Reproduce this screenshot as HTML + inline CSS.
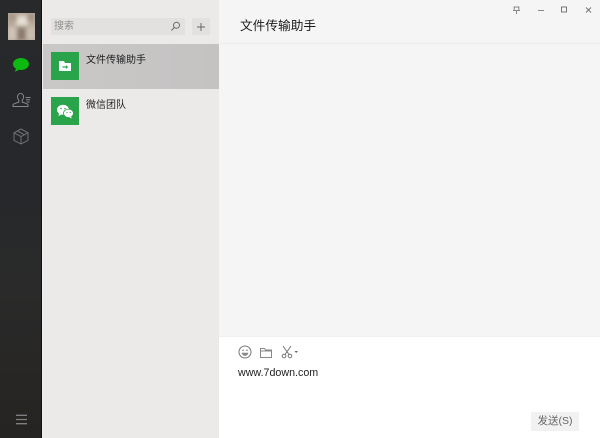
<!DOCTYPE html>
<html><head><meta charset="utf-8">
<style>
*{margin:0;padding:0;box-sizing:border-box}
html,body{width:600px;height:438px;overflow:hidden;background:#fff}
body{position:relative;font-family:"Liberation Sans","Noto Sans CJK SC",sans-serif}
div,svg{position:absolute}
#side{left:0;top:0;width:42px;height:438px;background:linear-gradient(180deg,#27292b 0%,#26282b 40%,#2a2a2a 65%,#262422 100%);border-right:1px solid #0f0f0f}
#ava{left:8px;top:13px;width:27px;height:27px;background:#b8aa9c;overflow:hidden}
#ava i{position:absolute;display:block;filter:blur(2px)}
#list{left:42px;top:0;width:177px;height:438px;background:#eceae8;border-left:1px solid #f0efed}
#search{left:51px;top:18px;width:134px;height:17px;background:#e3e1df;color:#8f8f8f;font-size:10px;line-height:17px;padding-left:3px}
#plus{left:192px;top:18px;width:18px;height:17px;background:#e3e1df}
#sel{left:43px;top:44px;width:176px;height:45px;background:linear-gradient(90deg,#c9c8c7,#c4c3c2)}
.g{left:51px;width:28px;height:28px;background:#2aa44a}
.n{left:86px;font-size:10px;line-height:14px;color:#222;white-space:nowrap}
#main{left:219px;top:0;width:381px;height:336px;background:#f5f5f5}
#hl{left:219px;top:43px;width:381px;height:1px;background:#ebebeb}
#title{left:240px;top:17px;font-size:12.7px;line-height:18px;color:#1a1a1a;white-space:nowrap}
#inp{left:219px;top:336px;width:381px;height:102px;background:#fff;border-top:1px solid #f0f0f0}
#url{left:238px;top:366px;font-size:10.7px;line-height:14px;color:#1f1f1f;white-space:nowrap}
#send{left:531px;top:412px;width:48px;height:19px;background:#f1f1f1;color:#666;font-size:10.500px;line-height:19px;text-align:center}
</style></head><body>
<div id="side"></div>
<div id="ava"><i style="left:8px;top:3px;width:12px;height:10px;background:#e6dfd4"></i><i style="left:0;top:0;width:8px;height:8px;background:#a8998b"></i><i style="right:0;top:0;width:7px;height:8px;background:#a39486"></i><i style="left:9px;top:15px;width:9px;height:12px;background:#8a7a6d"></i><i style="left:0;top:14px;width:8px;height:13px;background:#cfc5b8"></i><i style="right:0;top:14px;width:8px;height:13px;background:#c9bfb2"></i></div>
<svg style="left:12px;top:57px" width="18" height="17" viewBox="0 0 18 17"><path d="M9 1C4.600 1 1 3.600 1 7c0 2 1.200 3.600 3 4.700L2.800 15l4.100-2.200c.7.100 1.400.200 2.100.200 4.400 0 8-2.700 8-6S13.400 1 9 1z" fill="#0cba12"/></svg>
<svg style="left:12px;top:92px" width="20" height="16" viewBox="0 0 20 16" fill="none" stroke="#85878a" stroke-width="1"><path d="M8.500 1.500c-1.900 0-3 1.500-3 3.400 0 1.500.6 2.500 1.300 3.200v2L2 11.800c-.7.300-1 .7-1 1.200v1.500h15V13c0-.5-.3-.9-1-1.200l-4.800-1.700v-2c.7-.7 1.300-1.700 1.300-3.200 0-1.900-1.100-3.400-3-3.400z"/><path d="M13.500 5.500h5M14 7.800h4M14.500 10h3"/></svg>
<svg style="left:13px;top:128px" width="16" height="17" viewBox="0 0 16 17" fill="none" stroke="#6f7174" stroke-width="1"><path d="M8 1l7 3.800v7.600L8 16 1 12.400V4.800zM1 4.800l7 3.800 7-3.800M8 8.600V16M4.500 3l7 3.800"/></svg>
<svg style="left:15px;top:414px" width="13" height="12" viewBox="0 0 13 12" stroke="#7d7f82" stroke-width="1.300"><path d="M1 1.300h11M1 5.500h11M1 9.700h11"/></svg>
<div id="list"></div>
<div id="search">搜索</div>
<svg style="left:170px;top:21px" width="11" height="11" viewBox="0 0 11 11" fill="none" stroke="#6a6a6a" stroke-width="1"><circle cx="6.500" cy="4.300" r="3"/><path d="M4.300 6.500L1.500 9.500"/></svg>
<div id="plus"></div>
<svg style="left:196px;top:22px" width="10" height="10" viewBox="0 0 10 10" stroke="#666" stroke-width="1"><path d="M5 1v8M1 5h8"/></svg>
<div id="sel"></div>
<div class="g" style="top:52px"></div>
<svg style="left:58px;top:60px" width="14" height="12" viewBox="0 0 14 12"><path d="M1 1h5l1 2h6v8H1z" fill="#fff"/><path d="M4.500 7h3.500" stroke="#2aa44a" stroke-width="1.200"/><path d="M8 5l2 2-2 2z" fill="#2aa44a"/></svg>
<div class="n" style="top:54px">文件传输助手</div>
<div class="g" style="top:97px"></div>
<svg style="left:56px;top:104px" width="18" height="15" viewBox="0 0 18 15"><ellipse cx="7" cy="5.800" rx="6" ry="5" fill="#fff"/><path d="M3 9l-.5 3 3-1.500z" fill="#fff"/><ellipse cx="12.500" cy="9.300" rx="5" ry="4.200" fill="#fff" stroke="#2aa44a" stroke-width=".8"/><path d="M15 12.500l.8 2-2.500-1z" fill="#fff"/><circle cx="5" cy="4.500" r=".8" fill="#2aa44a"/><circle cx="9" cy="4.500" r=".8" fill="#2aa44a"/><circle cx="11" cy="8.500" r=".6" fill="#2aa44a"/><circle cx="14.200" cy="8.500" r=".6" fill="#2aa44a"/></svg>
<div class="n" style="top:99px">微信团队</div>
<div id="main"></div>
<div id="hl"></div>
<div id="title">文件传输助手</div>
<svg style="left:512px;top:5px" width="9" height="9" viewBox="0 0 9 9" stroke="#888" stroke-width="1" fill="none"><path d="M1.500 2h6M2.500 2l-.5 3M6.500 2l.5 3M1 5.500h7M4.500 5.500V9"/></svg>
<svg style="left:537px;top:5px" width="9" height="9" viewBox="0 0 9 9" stroke="#888" stroke-width="1"><path d="M1 5.500h6"/></svg>
<svg style="left:560px;top:5px" width="8" height="8" viewBox="0 0 8 8" stroke="#777" stroke-width="1" fill="none"><rect x="1.500" y="2" width="5" height="5"/></svg>
<svg style="left:584px;top:5px" width="9" height="9" viewBox="0 0 9 9" stroke="#777" stroke-width="1"><path d="M2 2.500l5 5M7 2.500l-5 5"/></svg>
<div id="inp"></div>
<svg style="left:238px;top:345px" width="14" height="14" viewBox="0 0 14 14" fill="none" stroke="#777" stroke-width="1"><circle cx="7" cy="7" r="6"/><circle cx="5" cy="5.300" r=".7" fill="#666" stroke="none"/><circle cx="9" cy="5.300" r=".7" fill="#666" stroke="none"/><path d="M3.800 7.800h6.400C10 10 8.500 10.800 7 10.800S4 10 3.800 7.800z" fill="#888" stroke="none"/></svg>
<svg style="left:259px;top:346px" width="14" height="13" viewBox="0 0 14 13" fill="none" stroke="#888" stroke-width="1"><path d="M1.500 2.500v9h11v-7.500H6.500l-1-1.500zM1.500 5h11"/></svg>
<svg style="left:281px;top:345px" width="18" height="14" viewBox="0 0 18 14" fill="none" stroke="#777" stroke-width="1"><path d="M2 1l6 8.500M10 1L4 9.500"/><circle cx="3" cy="11" r="1.800"/><circle cx="9" cy="11" r="1.800"/><path d="M13.500 6h3.500L15.200 8z" fill="#666" stroke="none"/></svg>
<div id="url">www.7down.com</div>
<div id="send">发送(S)</div>
</body></html>
